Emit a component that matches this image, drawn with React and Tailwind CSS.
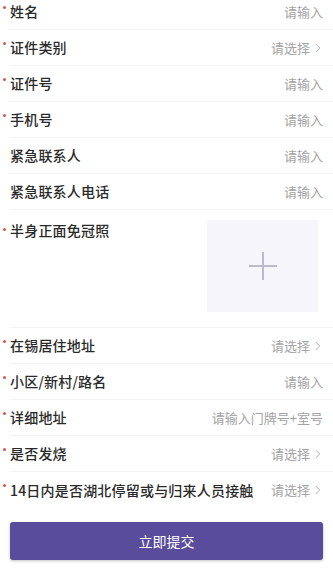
import { ChevronRight } from "lucide-react";

const topRows = [
  { label: "姓名", required: true, hint: "请输入" },
  { label: "证件类别", required: true, hint: "请选择", arrow: true },
  { label: "证件号", required: true, hint: "请输入" },
  { label: "手机号", required: true, hint: "请输入" },
  { label: "紧急联系人", hint: "请输入" },
  { label: "紧急联系人电话", hint: "请输入" },
];

const bottomRows = [
  { label: "在锡居住地址", required: true, hint: "请选择", arrow: true },
  { label: "小区/新村/路名", required: true, hint: "请输入" },
  { label: "详细地址", required: true, hint: "请输入门牌号+室号" },
  { label: "是否发烧", required: true, hint: "请选择", arrow: true },
  { label: "14日内是否湖北停留或与归来人员接触", required: true, hint: "请选择", arrow: true, last: true },
];

function Row({ label, required, hint, arrow, last }) {
  return (
    <div className="pl-[10px]">
      <div className={"relative flex items-center justify-between h-[36px] pr-[10px] " + (last ? "" : "border-b border-[#f3f3f3]")}>
        {required && (
          <span className="absolute -left-[7px] top-[12px] w-[3px] h-[3px] rounded-full bg-[#d9534f]" />
        )}
        <span className="text-[14px] font-medium text-[#2a2a2a] tracking-[0.2px] whitespace-nowrap">{label}</span>
        <span className="flex items-center text-[13px] text-[#a3a3a3] whitespace-nowrap">
          {hint}
          {arrow && <ChevronRight size={14} strokeWidth={1.5} className="ml-[1px] -mr-[2px]" />}
        </span>
      </div>
    </div>
  );
}

export default function App() {
  return (
    <div
      className="w-[333px] h-[586px] bg-white overflow-hidden"
      style={{ fontFamily: '"Noto Sans CJK SC", "Noto Sans", sans-serif' }}
    >
      <div className="-mt-[6px]">
        {topRows.map(r => (
          <Row key={r.label} {...r} />
        ))}

        {/* 照片 */}
        <div className="pl-[10px]">
          <div className="relative flex justify-between pr-[15px] pt-[10px] pb-[15px] border-b border-[#f3f3f3]">
            <span className="absolute -left-[7px] top-[18px] w-[3px] h-[3px] rounded-full bg-[#d9534f]" />
            <span className="text-[14px] font-medium text-[#2a2a2a] tracking-[0.2px] leading-[20px]">半身正面免冠照</span>
            <div className="w-[111px] h-[92px] bg-[#f6f6fa] flex items-center justify-center">
              <svg width="30" height="30" viewBox="0 0 30 30">
                <path d="M15 1v28M1 15h28" stroke="#bcbacb" strokeWidth="2" />
              </svg>
            </div>
          </div>
        </div>

        {bottomRows.map(r => (
          <Row key={r.label} {...r} />
        ))}
      </div>

      <div className="px-[10px] mt-[14px]">
        <button className="w-full h-[38px] rounded-[3px] bg-[#594c9b] text-white text-[14px] shadow-[0_1px_3px_rgba(0,0,0,0.25)]">
          立即提交
        </button>
      </div>
    </div>
  );
}
